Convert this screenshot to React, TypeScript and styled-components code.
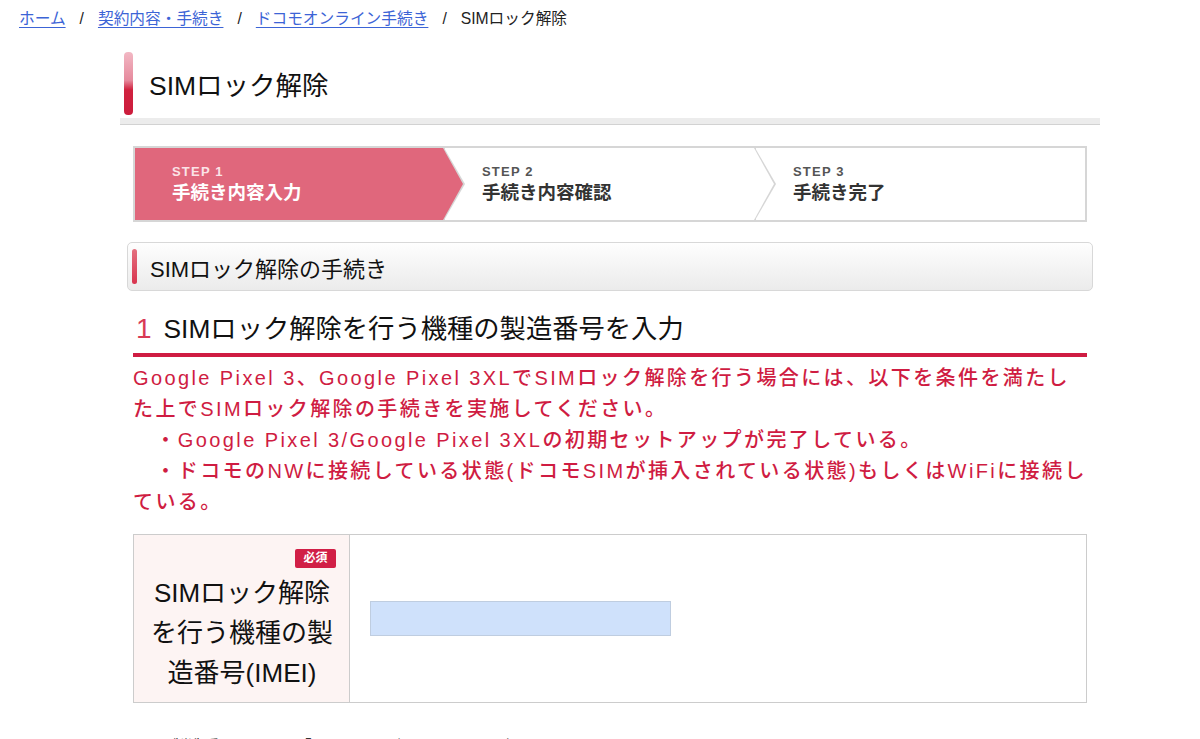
import styled, { createGlobalStyle } from "styled-components";

const GlobalStyle = createGlobalStyle`
  body {
    margin: 0;
    background: #fff;
    color: #222;
    font-family: "Liberation Sans", "Noto Sans CJK JP", sans-serif;
  }
`;

const RED = "#cf1c42";
const INDENT = "\u3000";

interface StepData {
  label: string;
  title: string;
  width?: number;
}

const steps: StepData[] = [
  { label: "STEP 1", title: "手続き内容入力", width: 310 },
  { label: "STEP 2", title: "手続き内容確認", width: 311 },
  { label: "STEP 3", title: "手続き完了" },
];

const App = () => {
  return (
    <>
      <GlobalStyle />
      <Breadcrumb>
        <Crumb href="#">ホーム</Crumb>
        <Sep>/</Sep>
        <Crumb href="#">契約内容・手続き</Crumb>
        <Sep>/</Sep>
        <Crumb href="#">ドコモオンライン手続き</Crumb>
        <Sep>/</Sep>
        <Current>SIMロック解除</Current>
      </Breadcrumb>

      <Main>
        <PageHeader>
          <TitleBar />
          <PageTitle>SIMロック解除</PageTitle>
        </PageHeader>
        <TitleRule />

        <Content>
          <Steps>
            {steps.map((step, i) => (
              <Step
                key={step.label}
                $active={i === 0}
                $arrow={i < steps.length - 1}
                $width={step.width}
                $z={steps.length - i}
              >
                <StepLabel $active={i === 0}>{step.label}</StepLabel>
                <StepTitle $active={i === 0}>{step.title}</StepTitle>
              </Step>
            ))}
          </Steps>
        </Content>

        <SectionHeader>
          <SectionMark />
          <SectionTitle>SIMロック解除の手続き</SectionTitle>
        </SectionHeader>

        <Content>
          <NumberedHeading>
            <Num>1</Num>
            <span>SIMロック解除を行う機種の製造番号を入力</span>
          </NumberedHeading>

          <Notice>
            Google Pixel 3、Google Pixel 3XLでSIMロック解除を行う場合には、以下を条件を満たした上でSIMロック解除の手続きを実施してください。
            <br />
            {INDENT}・Google Pixel 3/Google Pixel 3XLの初期セットアップが完了している。
            <br />
            {INDENT}・ドコモのNWに接続している状態(ドコモSIMが挿入されている状態)もしくはWiFiに接続している。
          </Notice>

          <FormTable>
            <LabelCell>
              <Required>必須</Required>
              <LabelText>SIMロック解除を行う機種の製造番号(IMEI)</LabelText>
            </LabelCell>
            <InputCell>
              <ImeiInput type="text" aria-label="製造番号(IMEI)" />
            </InputCell>
          </FormTable>

          <Note>※製造番号(IMEI)は「*#06#」をダイヤルすると確認できます。</Note>
        </Content>
      </Main>
    </>
  );
};

const Breadcrumb = styled.nav`
  display: flex;
  align-items: center;
  padding: 9px 19px 0;
  font-size: 15.7px;
  line-height: 20px;
`;

const Crumb = styled.a`
  color: #3c64d6;
  text-decoration: underline;
  text-underline-offset: 3px;
`;

const Sep = styled.span`
  margin: 0 14px;
  color: #222;
`;

const Current = styled.span`
  color: #222;
`;

const Main = styled.main`
  width: 980px;
  margin: 23px 0 0 120px;
`;

const PageHeader = styled.div`
  display: flex;
  align-items: center;
  padding-left: 4px;
  height: 63px;
`;

const TitleBar = styled.div`
  width: 9px;
  height: 63px;
  border-radius: 4px;
  background: linear-gradient(#f2b8c4 0%, #e68a9d 45%, #d0223f 60%, #cc1c3c 100%);
`;

const PageTitle = styled.h1`
  margin: 0 0 0 16px;
  font-size: 26.5px;
  font-weight: normal;
  color: #111;
`;

const TitleRule = styled.div`
  margin-top: 3px;
  height: 6px;
  background: #ececec;
  border-bottom: 1px solid #d2d2d2;
`;

const Content = styled.div`
  padding: 0 13px;
`;

const Steps = styled.div`
  display: flex;
  margin-top: 21px;
  height: 76px;
`;

const Step = styled.div<{ $active?: boolean; $arrow?: boolean; $width?: number; $z: number }>`
  position: relative;
  z-index: ${(p) => p.$z};
  box-sizing: border-box;
  ${(p) => (p.$width ? `width: ${p.$width}px; flex: none;` : "flex: 1;")}
  height: 76px;
  padding-left: 37px;
  display: flex;
  flex-direction: column;
  justify-content: center;
  background: ${(p) => (p.$active ? "#e0677c" : "#fff")};
  border: 2px solid #d6d6d6;
  border-right: ${(p) => (p.$arrow ? "none" : "2px solid #d6d6d6")};

  ${(p) =>
    p.$arrow &&
    `
    &::before {
      content: "";
      position: absolute;
      top: -2px;
      right: -22px;
      border-top: 38px solid transparent;
      border-bottom: 38px solid transparent;
      border-left: 22px solid #d6d6d6;
    }
    &::after {
      content: "";
      position: absolute;
      top: 0;
      right: -20px;
      border-top: 36px solid transparent;
      border-bottom: 36px solid transparent;
      border-left: 20px solid ${p.$active ? "#e0677c" : "#fff"};
    }
  `}
`;

const StepLabel = styled.div<{ $active?: boolean }>`
  font-size: 13px;
  line-height: 16px;
  font-weight: bold;
  letter-spacing: 1.2px;
  color: ${(p) => (p.$active ? "#fbe3e7" : "#555")};
`;

const StepTitle = styled.div<{ $active?: boolean }>`
  margin-top: 1px;
  font-size: 18.5px;
  line-height: 23px;
  font-weight: bold;
  color: ${(p) => (p.$active ? "#fff" : "#333")};
`;

const SectionHeader = styled.div`
  display: flex;
  align-items: center;
  box-sizing: border-box;
  height: 49px;
  margin: 20px 7px 0;
  padding-left: 4px;
  border: 1px solid #d8d8d8;
  border-radius: 5px;
  background: linear-gradient(#fefefe, #ebebeb);
`;

const SectionMark = styled.div`
  width: 5px;
  height: 35px;
  border-radius: 3px;
  background: linear-gradient(#e4707f, #d8344e);
`;

const SectionTitle = styled.h2`
  margin: 0 0 0 13px;
  font-size: 22px;
  font-weight: normal;
  color: #111;
`;

const NumberedHeading = styled.h3`
  display: flex;
  align-items: center;
  gap: 12px;
  margin: 18px 0 0;
  padding: 0 0 4px 3px;
  line-height: 40px;
  font-size: 26.3px;
  font-weight: normal;
  color: #111;
  border-bottom: 4px solid ${RED};
`;

const Num = styled.span`
  font-size: 28px;
  color: #d83a55;
`;

const Notice = styled.p`
  margin: 6px 0 0;
  font-size: 20px;
  line-height: 31px;
  font-weight: 500;
  letter-spacing: 2.4px;
  color: ${RED};
`;

const FormTable = styled.div`
  display: grid;
  grid-template-columns: 216px 1fr;
  margin-top: 16px;
  border: 1px solid #cccccc;
`;

const LabelCell = styled.div`
  display: flex;
  flex-direction: column;
  align-items: flex-end;
  padding: 14px 13px 9px 14px;
  background: #fdf4f3;
  border-right: 1px solid #cccccc;
`;

const Required = styled.span`
  width: 41px;
  height: 19px;
  line-height: 19px;
  text-align: center;
  border-radius: 2px;
  background: #d11f46;
  color: #fff;
  font-size: 12px;
  font-weight: bold;
`;

const LabelText = styled.div`
  align-self: stretch;
  margin-top: 5px;
  text-align: center;
  font-size: 26px;
  line-height: 40px;
  color: #111;
`;

const InputCell = styled.div`
  display: flex;
  align-items: center;
  padding-left: 20px;
`;

const ImeiInput = styled.input`
  box-sizing: border-box;
  width: 301px;
  height: 35px;
  margin: 0;
  border: 1px solid #bfcde0;
  background: #cfe1fb;
  font-size: 18px;
  outline: none;
`;

const Note = styled.p`
  margin: 32px 0 0 23px;
  font-size: 16px;
  line-height: 24px;
  color: #333;
`;

export default App;
